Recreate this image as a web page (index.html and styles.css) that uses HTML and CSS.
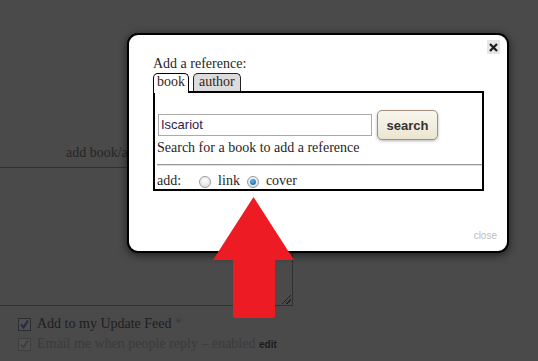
FILE: index.html
```html
<!DOCTYPE html>
<html>
<head>
<meta charset="utf-8">
<link rel="stylesheet" href="styles.css">
</head>
<body>
<div class="page">
  <div class="addline">add book/author</div>
  <div class="textarea"><span class="grip"></span></div>
  <div class="opts">
    <div class="opt">
      <span class="cb"><svg width="11" height="11" viewBox="0 0 11 11"><path d="M2 5.5 L4.5 8.5 L9 1.5" fill="none" stroke="#232b4d" stroke-width="2"/></svg></span>
      <span>Add to my Update Feed <span class="star">*</span></span>
    </div>
    <div class="opt dis">
      <span class="cb"><svg width="11" height="11" viewBox="0 0 11 11"><path d="M2 5.5 L4.5 8.5 L9 1.5" fill="none" stroke="#3c3c3c" stroke-width="1.6"/></svg></span>
      <span>Email me when people reply – enabled <span class="edit">edit</span></span>
    </div>
  </div>
</div>

<div class="dialog">
  <span class="x"><svg width="9" height="9" viewBox="0 0 9 9"><path d="M1 1 L8 8 M8 1 L1 8" stroke="#1a1a1a" stroke-width="2.2"/></svg></span>
  <div class="title">Add a reference:</div>
  <div class="tabs">
    <span class="tab active">book</span>
    <span class="tab">author</span>
  </div>
  <div class="box">
    <div class="searchrow">
      <span class="input">Iscariot</span>
      <span class="btn">search</span>
    </div>
    <div class="hint">Search for a book to add a reference</div>
    <div class="rule"></div>
    <div class="addrow">
      <span class="lbl">add:</span>
      <span class="radio"></span><span>link</span>
      <span class="radio on"><span class="dot"></span></span><span>cover</span>
    </div>
  </div>
  <div class="foot"><span class="close">close</span></div>
</div>

<svg class="arrow" width="84" height="124" viewBox="0 0 84 124"><path d="M41.5 1 L82 64 L63 64 L63 120 Q63 122 61 122 L23 122 Q21 122 21 120 L21 64 L1 64 Z" fill="#ed1c24"/></svg>
</body>
</html>
```

FILE: styles.css
```css
html, body {
  margin: 0;
  padding: 0;
}
body {
  background: #4a4a4a;
  width: 538px;
  height: 361px;
  overflow: hidden;
  position: relative;
  font-family: "Liberation Serif", "Times New Roman", serif;
  font-size: 14px;
}
.page {
  display: flex;
  flex-direction: column;
}
.addline {
  padding: 145px 0 6px 66px;
  line-height: 16px;
  height: 16px;
  color: #262626;
  white-space: nowrap;
}
.textarea {
  margin-left: -10px;
  width: 303px;
  height: 139px;
  box-sizing: border-box;
  border: 1px solid #303030;
  position: relative;
}
.grip {
  position: absolute;
  right: 1px;
  bottom: 1px;
  width: 9px;
  height: 9px;
  background: linear-gradient(135deg, transparent 45%, #222 45%, #222 55%, transparent 55%, transparent 72%, #222 72%, #222 82%, transparent 82%);
}
.opts {
  display: flex;
  flex-direction: column;
  gap: 6px;
  padding: 11px 0 0 18px;
}
.opt {
  display: flex;
  align-items: center;
  gap: 6px;
  line-height: 14px;
  color: #1e1e1e;
}
.opt.dis {
  color: #3a3a3a;
}
.cb {
  width: 13px;
  height: 13px;
  box-sizing: border-box;
  border: 1px solid #2c2c2c;
  background: #4f4f4f;
  display: flex;
  align-items: center;
  justify-content: center;
}
.dis .cb {
  border-color: #3e3e3e;
}
.star {
  color: #3a3a3a;
}
.edit {
  font-family: "Liberation Sans", Arial, sans-serif;
  font-weight: bold;
  font-size: 10px;
  color: #1c1c1c;
}

.dialog {
  position: absolute;
  left: 127px;
  top: 33px;
  width: 382px;
  height: 220px;
  box-sizing: border-box;
  background: #fff;
  border: 2px solid #000;
  border-radius: 11px;
  box-shadow: 0 2px 8px rgba(0, 0, 0, 0.6);
  padding: 21px 0 0 24px;
  display: flex;
  flex-direction: column;
  color: #1f1f1f;
}
.x {
  position: absolute;
  top: 5px;
  right: 7px;
  width: 13px;
  height: 14px;
  background: #e6e6e6;
  display: flex;
  align-items: center;
  justify-content: center;
}
.title {
  line-height: 16px;
  height: 17px;
}
.tabs {
  display: flex;
  align-items: flex-end;
  gap: 4px;
  margin-bottom: -2px;
  position: relative;
  z-index: 1;
  height: 20px;
}
.tab {
  border: 1px solid #222;
  border-bottom: none;
  border-radius: 5px 5px 0 0;
  padding: 0 5px;
  line-height: 16px;
  height: 17px;
  background: #dcdcdc;
  color: #3b2313;
  margin-bottom: 2px;
}
.tab.active {
  background: #fff;
  padding: 0 3px;
  height: 19px;
  margin-bottom: 0;
  border-color: #000;
}
.box {
  width: 331px;
  box-sizing: border-box;
  border: 2px solid #000;
  padding: 17px 0 0 2px;
  height: 100px;
}
.searchrow {
  display: flex;
  align-items: center;
  gap: 5px;
}
.input {
  margin-left: 1px;
  width: 214px;
  height: 22px;
  box-sizing: border-box;
  border: 1px solid #aaa;
  font-family: "Liberation Sans", Arial, sans-serif;
  font-size: 13px;
  line-height: 20px;
  padding-left: 2px;
  color: #2d1b4e;
}
.btn {
  width: 61px;
  height: 30px;
  box-sizing: border-box;
  border: 1px solid #a58e7c;
  border-radius: 5px;
  background: linear-gradient(#f8f6ee, #ece5d0);
  box-shadow: 0 1px 3px rgba(0, 0, 0, 0.3);
  font-family: "Liberation Sans", Arial, sans-serif;
  font-weight: bold;
  font-size: 13px;
  color: #333;
  display: flex;
  align-items: center;
  justify-content: center;
}
.hint {
  line-height: 16px;
}
.rule {
  margin: 8px 0 0 0;
  height: 1px;
  border-top: 1px solid #9a9a9a;
  background: #dedede;
}
.addrow {
  margin-top: 7px;
  display: flex;
  align-items: center;
  line-height: 16px;
}
.lbl {
  margin-right: 18px;
}
.radio {
  width: 12px;
  height: 12px;
  box-sizing: border-box;
  border-radius: 50%;
  border: 1px solid #9a9a9a;
  background: radial-gradient(circle at 50% 35%, #ffffff, #d6d6d6);
  margin: 2px 7px 0 0;
  display: flex;
  align-items: center;
  justify-content: center;
}
.radio + span {
  margin-right: 7px;
}
.radio.on .dot {
  width: 6px;
  height: 6px;
  border-radius: 50%;
  background: radial-gradient(circle at 40% 35%, #5ab4ee, #0b5a99);
}
.foot {
  margin-top: auto;
  display: flex;
  justify-content: flex-end;
  padding: 0 10px 9px 0;
}
.close {
  font-family: "Liberation Sans", Arial, sans-serif;
  font-size: 10px;
  color: #bbb;
  line-height: 12px;
}
.arrow {
  position: absolute;
  left: 212px;
  top: 196px;
}
```
